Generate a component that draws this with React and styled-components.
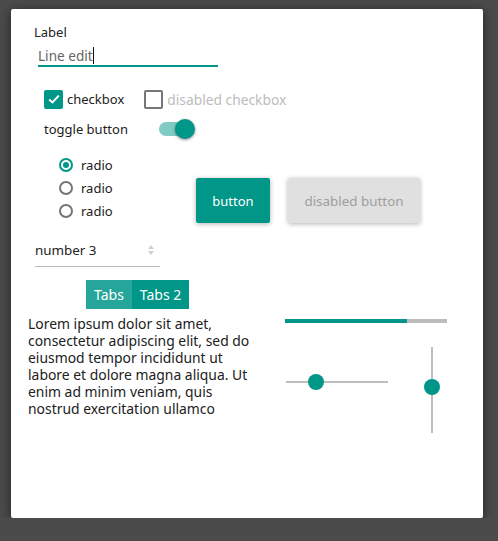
import React from "react";
import styled, { createGlobalStyle, css } from "styled-components";

const teal = "#009688";

const GlobalStyle = createGlobalStyle`
  html, body {
    margin: 0;
    padding: 0;
    background: #4b4b4b;
    font-family: "Noto Sans", "Open Sans", sans-serif;
    font-size: 13px;
    color: #212121;
  }
  * { box-sizing: border-box; }
`;

const Panel = styled.div`
  margin: 9px 0 0 11px;
  width: 472px;
  height: 509px;
  background: #fff;
  border-radius: 2px;
  box-shadow: 0 2px 12px rgba(0, 0, 0, 0.55);
  padding: 15px 0 0 17px;
  display: flex;
  flex-direction: column;
  align-items: flex-start;
`;

const Label = styled.div`
  margin-left: 6px;
  height: 17px;
  line-height: 17px;
  color: #222;
`;

const LineEdit = styled.div`
  margin: 6px 0 0 10px;
  width: 180px;
  height: 20px;
  line-height: 17px;
  color: #666;
  font-size: 13.6px;
  border-bottom: 2px solid ${teal};
  display: flex;
  align-items: flex-start;
`;

const Caret = styled.span`
  display: inline-block;
  width: 1px;
  height: 17px;
  background: #111;
`;

const CheckRow = styled.div`
  margin: 23px 0 0 16px;
  height: 18px;
  display: flex;
  align-items: center;
`;

const CheckItem = styled.div`
  display: flex;
  align-items: center;
  gap: 4px;
  margin-right: 20px;
  font-size: ${(p) => (p.disabled ? 13.8 : 13)}px;
  color: ${(p) => (p.disabled ? "#bdbdbd" : "#222")};
`;

const Box = styled.span`
  width: 19px;
  height: 19px;
  border-radius: 2px;
  display: flex;
  align-items: center;
  justify-content: center;
  ${(p) =>
    p.checked
      ? css`background: ${teal};`
      : css`border: 2px solid #777;`}
`;

const ToggleRow = styled.div`
  margin: 11px 0 0 16px;
  height: 20px;
  display: flex;
  align-items: center;
`;

const ToggleText = styled.span`
  width: 115px;
`;

const Toggle = styled.span`
  position: relative;
  width: 36px;
  height: 20px;
`;

const Track = styled.span`
  position: absolute;
  left: 0;
  top: 3px;
  width: 32px;
  height: 14px;
  border-radius: 7px;
  background: #80cbc4;
`;

const Thumb = styled.span`
  position: absolute;
  right: 0;
  top: 0;
  width: 20px;
  height: 20px;
  border-radius: 50%;
  background: ${teal};
  box-shadow: 0 1px 3px rgba(0, 0, 0, 0.45);
`;

const MiddleRow = styled.div`
  margin-top: 14px;
  display: flex;
  align-items: flex-start;
`;

const RadioCol = styled.div`
  margin-left: 31px;
  width: 137px;
  display: flex;
  flex-direction: column;
`;

const RadioItem = styled.div`
  height: 23px;
  display: flex;
  align-items: center;
  gap: 8px;
`;

const RadioCircle = styled.span`
  width: 14px;
  height: 14px;
  border-radius: 50%;
  border: 2px solid ${(p) => (p.checked ? teal : "#757575")};
  display: flex;
  align-items: center;
  justify-content: center;
  &::after {
    content: "";
    width: 6px;
    height: 6px;
    border-radius: 50%;
    background: ${(p) => (p.checked ? teal : "transparent")};
  }
`;

const Buttons = styled.div`
  margin-top: 25px;
  display: flex;
  gap: 18px;
`;

const Button = styled.div`
  height: 45px;
  width: ${(p) => (p.disabled ? 132 : 74)}px;
  border-radius: 2px;
  display: flex;
  align-items: center;
  justify-content: center;
  font-size: ${(p) => (p.disabled ? 13.4 : 13)}px;
  background: ${(p) => (p.disabled ? "#e0e0e0" : teal)};
  color: ${(p) => (p.disabled ? "#9e9e9e" : "#fff")};
  box-shadow: 0 1px 5px rgba(0, 0, 0, 0.3);
`;

const SpinBox = styled.div`
  margin: 15px 0 0 7px;
  width: 125px;
  height: 29px;
  padding-bottom: 5px;
  font-size: 13.4px;
  border-bottom: 1px solid #bdbdbd;
  display: flex;
  align-items: center;
  justify-content: space-between;
`;

const SpinArrows = styled.span`
  margin-right: 6px;
  display: flex;
  flex-direction: column;
  gap: 2px;
`;

const Tabs = styled.div`
  margin: 13px 0 0 58px;
  display: flex;
  height: 29px;
`;

const Tab = styled.div`
  padding: 0 8px;
  display: flex;
  align-items: center;
  color: #fff;
  font-size: 14px;
  background: ${(p) => (p.active ? teal : "#26a69a")};
`;

const BottomRow = styled.div`
  display: flex;
  align-items: flex-start;
`;

const Lorem = styled.p`
  margin: 6px 0 0;
  width: 228px;
  line-height: 17px;
  font-size: 13.9px;
  color: #212121;
`;

const RightCol = styled.div`
  margin-left: 29px;
  display: flex;
  flex-direction: column;
`;

const Progress = styled.div`
  margin-top: 10px;
  width: 162px;
  height: 4px;
  background: #bdbdbd;
  display: flex;
`;

const ProgressFill = styled.div`
  height: 100%;
  background: ${teal};
`;

const SliderRow = styled.div`
  display: flex;
  align-items: flex-start;
`;

const HSlider = styled.div`
  position: relative;
  margin: 51px 0 0 1px;
  width: 102px;
  height: 16px;
  &::before {
    content: "";
    position: absolute;
    left: 0;
    right: 0;
    top: 7px;
    height: 2px;
    background: #bdbdbd;
  }
`;

const VSlider = styled.div`
  position: relative;
  margin: 24px 0 0 36px;
  width: 16px;
  height: 86px;
  &::before {
    content: "";
    position: absolute;
    top: 0;
    bottom: 0;
    left: 7px;
    width: 2px;
    background: #bdbdbd;
  }
`;

const Knob = styled.span`
  position: absolute;
  width: 16px;
  height: 16px;
  border-radius: 50%;
  background: ${teal};
`;

const radios = [true, false, false];

export default function App() {
  const hValue = 0.29;
  const vValue = 0.46;
  return (
    <>
      <GlobalStyle />
      <Panel>
        <Label>Label</Label>
        <LineEdit>
          Line edit
          <Caret />
        </LineEdit>

        <CheckRow>
          <CheckItem>
            <Box checked>
              <svg width="14" height="14" viewBox="0 0 14 14">
                <path d="M2.2 7.4 L5.4 10.4 L11.8 3.6" fill="none" stroke="#fff" strokeWidth="2" />
              </svg>
            </Box>
            checkbox
          </CheckItem>
          <CheckItem disabled>
            <Box />
            disabled checkbox
          </CheckItem>
        </CheckRow>

        <ToggleRow>
          <ToggleText>toggle button</ToggleText>
          <Toggle>
            <Track />
            <Thumb />
          </Toggle>
        </ToggleRow>

        <MiddleRow>
          <RadioCol>
            {radios.map((on, i) => (
              <RadioItem key={i}>
                <RadioCircle checked={on} />
                radio
              </RadioItem>
            ))}
          </RadioCol>
          <Buttons>
            <Button>button</Button>
            <Button disabled>disabled button</Button>
          </Buttons>
        </MiddleRow>

        <SpinBox>
          number 3
          <SpinArrows>
            <svg width="6" height="4" viewBox="0 0 6 4">
              <path d="M0 4 L3 0 L6 4 Z" fill="#cfcfcf" />
            </svg>
            <svg width="6" height="4" viewBox="0 0 6 4">
              <path d="M0 0 L3 4 L6 0 Z" fill="#cfcfcf" />
            </svg>
          </SpinArrows>
        </SpinBox>

        <Tabs>
          <Tab>Tabs</Tab>
          <Tab active>Tabs 2</Tab>
        </Tabs>

        <BottomRow>
          <Lorem>
            Lorem ipsum dolor sit amet, consectetur adipiscing elit, sed do
            eiusmod tempor incididunt ut labore et dolore magna aliqua. Ut enim
            ad minim veniam, quis nostrud exercitation ullamco
          </Lorem>
          <RightCol>
            <Progress>
              <ProgressFill style={{ width: "75%" }} />
            </Progress>
            <SliderRow>
              <HSlider>
                <Knob style={{ left: `${hValue * 102 - 8}px`, top: 0 }} />
              </HSlider>
              <VSlider>
                <Knob style={{ top: `${vValue * 86 - 8}px`, left: 0 }} />
              </VSlider>
            </SliderRow>
          </RightCol>
        </BottomRow>
      </Panel>
    </>
  );
}
